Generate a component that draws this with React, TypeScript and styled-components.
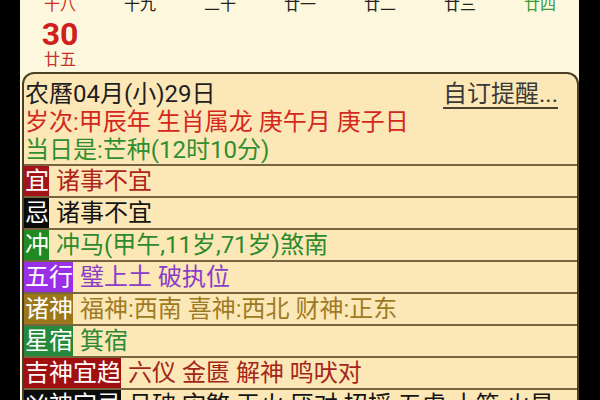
import React from "react";
import styled, { createGlobalStyle } from "styled-components";

const Global = createGlobalStyle`
  html, body { margin: 0; padding: 0; background: #000; }
  body { width: 600px; height: 400px; overflow: hidden; }
`;

const FONT = `Roboto, "Noto Sans CJK SC", "Noto Sans", sans-serif`;

const Frame = styled.div`
  width: 600px;
  height: 400px;
  background: #000;
  display: flex;
  font-family: ${FONT};
`;

const Screen = styled.div`
  margin-left: 20px;
  width: 559px;
  height: 400px;
  background: #fdf8dd;
  overflow: hidden;
  display: flex;
  flex-direction: column;
`;

const WeekRow = styled.div`
  display: grid;
  grid-template-columns: repeat(7, 80px);
  margin-top: -5px;
  font-size: 16px;
  line-height: 20px;
`;

const LunarLabel = styled.div<{ $tone?: "red" | "green" }>`
  text-align: center;
  color: ${(p) => (p.$tone === "red" ? "#cc2a24" : p.$tone === "green" ? "#3c9a3a" : "#222")};
`;

const DateRow = styled.div`
  display: grid;
  grid-template-columns: repeat(7, 80px);
  margin-top: 3px;
`;

const DateCell = styled.div`
  display: flex;
  flex-direction: column;
  align-items: center;
  color: #d0201c;
`;

const DayNum = styled.div`
  font-family: Roboto, sans-serif;
  font-weight: 700;
  font-size: 32px;
  line-height: 32px;
`;

const DaySub = styled.div`
  font-size: 16px;
  line-height: 19px;
  color: #c8302a;
`;

const Panel = styled.div`
  margin-top: 3px;
  margin-left: 2px;
  flex: 1;
  background: #fce7b7;
  border: 2px solid #4b3f25;
  border-bottom: none;
  border-radius: 12px 12px 0 0;
  font-size: 24px;
  overflow: hidden;
`;

const Header = styled.div`
  padding: 6px 19px 0 1px;
`;

const Line = styled.div<{ $color: string }>`
  display: flex;
  justify-content: space-between;
  line-height: 28px;
  color: ${(p) => p.$color};
  white-space: nowrap;
`;

const Remind = styled.span`
  color: #3a3a36;
  text-decoration: underline;
  text-decoration-thickness: 2px;
  text-underline-offset: 5px;
  text-decoration-color: #4a4330;
`;

const Row = styled.div`
  display: flex;
  align-items: stretch;
  height: 30px;
  border-top: 2px solid #76653f;
  white-space: nowrap;
`;

const Tag = styled.div<{ $bg: string }>`
  background: ${(p) => p.$bg};
  color: #fff;
  line-height: 30px;
  padding: 0 0 0 1px;
`;

const Value = styled.div<{ $color: string }>`
  color: ${(p) => p.$color};
  line-height: 30px;
  padding-left: 7px;
`;

const week: { t: string; tone?: "red" | "green" }[] = [
  { t: "十八", tone: "red" },
  { t: "十九" },
  { t: "二十" },
  { t: "廿一" },
  { t: "廿二" },
  { t: "廿三" },
  { t: "廿四", tone: "green" },
];

const rows = [
  { tag: "宜", bg: "#a3141a", color: "#b0241c", text: "诸事不宜" },
  { tag: "忌", bg: "#0c0c0c", color: "#141414", text: "诸事不宜" },
  { tag: "冲", bg: "#1f8a22", color: "#2c8a2c", text: "冲马(甲午,11岁,71岁)煞南" },
  { tag: "五行", bg: "#9a2fe8", color: "#8a3cc8", text: "璧上土 破执位" },
  { tag: "诸神", bg: "#9b7719", color: "#9c7b24", text: "福神:西南 喜神:西北 财神:正东" },
  { tag: "星宿", bg: "#24893a", color: "#2d8a35", text: "箕宿" },
  { tag: "吉神宜趋", bg: "#a0100f", color: "#a3261a", text: "六仪 金匮 解神 鸣吠对" },
  { tag: "凶神宜忌", bg: "#0c0c0c", color: "#141414", text: "月破 灾煞 天火 厌对 招摇 五虚 土符 火星" },
];

export default function App() {
  return (
    <>
      <Global />
      <Frame>
        <Screen>
          <WeekRow>
            {week.map((w) => (
              <LunarLabel key={w.t} $tone={w.tone}>
                {w.t}
              </LunarLabel>
            ))}
          </WeekRow>
          <DateRow>
            <DateCell>
              <DayNum>30</DayNum>
              <DaySub>廿五</DaySub>
            </DateCell>
          </DateRow>
          <Panel>
            <Header>
              <Line $color="#1e1e1e">
                <span>农曆04月(小)29日</span>
                <Remind>自订提醒...</Remind>
              </Line>
              <Line $color="#d4281e">岁次:甲辰年 生肖属龙 庚午月 庚子日</Line>
              <Line $color="#2f8f2f">当日是:芒种(12时10分)</Line>
            </Header>
            {rows.map((r) => (
              <Row key={r.tag}>
                <Tag $bg={r.bg}>{r.tag}</Tag>
                <Value $color={r.color}>{r.text}</Value>
              </Row>
            ))}
          </Panel>
        </Screen>
      </Frame>
    </>
  );
}
